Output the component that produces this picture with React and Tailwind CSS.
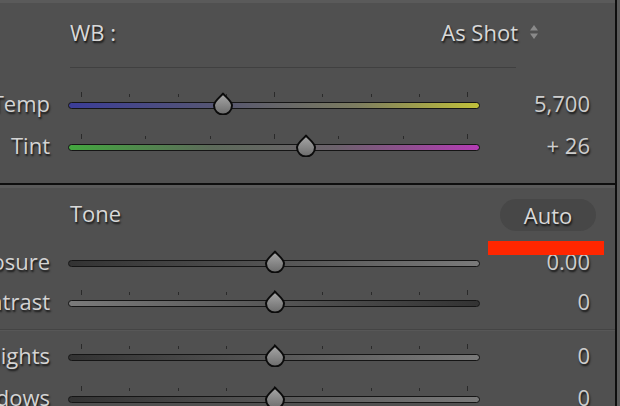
import React from 'react';

const font = { fontFamily: '"Open Sans", "Noto Sans", sans-serif' };

const Thumb = ({ x }) => (
  <svg
    className="absolute top-[-10px]"
    style={{ left: x - 11 }}
    width="22"
    height="23"
    viewBox="0 0 22 23"
  >
    <defs>
      <linearGradient id="thumbFill" x1="0" y1="0" x2="0" y2="1">
        <stop offset="0" stopColor="#a8a8a8" />
        <stop offset="1" stopColor="#6c6c6c" />
      </linearGradient>
    </defs>
    <path
      d="M11 1.5 C13 4.5 20 9 20 13.5 A9 9 0 0 1 2 13.5 C2 9 9 4.5 11 1.5 Z"
      fill="url(#thumbFill)"
      stroke="#0b0b0b"
      strokeWidth="2"
      strokeLinejoin="round"
    />
  </svg>
);

const Slider = ({ label, value, track, thumb, ticks, h = 'h-[42px]' }) => {
  const tickList = ticks
    ? Array.from({ length: ticks }, (_, k) => ({
        x: 13 + (386 / (ticks - 1)) * k,
        tall: k === 0 || k === ticks - 1 || k === (ticks - 1) / 2,
      }))
    : [];

  return (
    <div className={`flex items-center ${h}`}>
      <div className="w-[50px] mb-[4px] flex justify-end whitespace-nowrap text-[22px] text-[#d4d4d4] [text-shadow:1px_2px_2px_rgba(0,0,0,0.75)]">
        {label}
      </div>
      <div className="relative ml-[18px] w-[412px] h-[7px]">
        {tickList.map((t, i) => (
          <div
            key={i}
            className={`absolute w-px bg-[#2a2a2a] ${t.tall ? 'h-[5px] top-[-10px]' : 'h-[3px] top-[-8px]'}`}
            style={{ left: t.x }}
          />
        ))}
        <div className={`h-[7px] rounded-full border-[1.5px] border-[#151515] ${track}`} />
        <Thumb x={thumb} />
      </div>
      <div className="w-[110px] mb-[4px] text-right text-[22px] text-[#cdcdcd] [text-shadow:1px_2px_2px_rgba(0,0,0,0.75)]">
        {value}
      </div>
    </div>
  );
};

export default function App() {
  return (
    <div className="w-[620px] h-[406px] overflow-hidden bg-[#505050] flex" style={font}>
      <div className="relative w-[615px]">
        {/* top edge */}
        <div className="h-[3px] bg-[#5a5a5a]" />

        {/* WB header */}
        <div className="h-[58px] flex items-center pl-[70px] pr-[76px] text-[22px] text-[#d8d8d8] [text-shadow:1px_2px_2px_rgba(0,0,0,0.75)]">
          <span>WB :</span>
          <span className="ml-auto">As Shot</span>
          <svg className="ml-[11px]" width="10" height="16" viewBox="0 0 10 16">
            <path d="M5 1 L9 6.5 H1 Z" fill="#8a8a8a" />
            <path d="M5 15 L9 9.5 H1 Z" fill="#8a8a8a" />
          </svg>
        </div>
        <div className="mt-[6px] ml-[70px] w-[446px] h-px bg-[#404040]" />

        <div className="mt-[16px]">
          <Slider
            label="Temp"
            value="5,700"
            thumb={155}
            ticks={9}
            track="bg-[linear-gradient(to_right,#3b3d98,#59596e_40%,#7c7c60_70%,#c0c03a)]"
          />
          <Slider
            label="Tint"
            value="+ 26"
            thumb={238}
            ticks={7}
            track="bg-[linear-gradient(to_right,#43a83f,#5d6a5a_35%,#6c626c_65%,#b43cb4)]"
          />
        </div>

        {/* section divider */}
        <div className="mt-[15px] h-[2px] bg-[#0e0e0e]" />
        <div className="h-[3px] bg-[#5a5a5a]" />

        {/* Tone header */}
        <div className="h-[50px] flex items-center pl-[70px] pr-[19px] text-[22px] text-[#d8d8d8] [text-shadow:1px_2px_2px_rgba(0,0,0,0.75)]">
          <span>Tone</span>
          <div className="ml-auto mt-[4px] w-[96px] h-[32px] rounded-full bg-[#474747] flex items-center justify-center">
            Auto
          </div>
        </div>

        <div className="mt-[5px]">
          <Slider
            label="Exposure"
            value="0.00"
            thumb={207}
            h="h-[40px]"
            track="bg-[linear-gradient(to_right,#333333,#5a5a5a_60%,#7a7a7a)]"
          />
          <Slider
            label="Contrast"
            value="0"
            thumb={207}
            ticks={9}
            h="h-[40px]"
            track="bg-[linear-gradient(to_right,#7a7a7a,#5a5a5a_45%,#333333)]"
          />
        </div>

        <div className="mt-[6px] h-px bg-[#444444]" />
        <div className="h-px bg-[#575757]" />

        <div className="mt-[5px]">
          <Slider
            label="Highlights"
            value="0"
            thumb={207}
            ticks={9}
            track="bg-[linear-gradient(to_right,#333333,#5a5a5a_55%,#7a7a7a)]"
          />
          <Slider
            label="Shadows"
            value="0"
            thumb={207}
            ticks={9}
            track="bg-[linear-gradient(to_right,#333333,#5a5a5a_55%,#7a7a7a)]"
          />
        </div>

        {/* red annotation bar */}
        <div className="absolute left-[488px] top-[241px] w-[116px] h-[14px] bg-[#ff2600]" />
      </div>
      <div className="w-[2px] bg-[#0e0e0e]" />
      <div className="flex-1 bg-[#5a5a5a]" />
    </div>
  );
}
